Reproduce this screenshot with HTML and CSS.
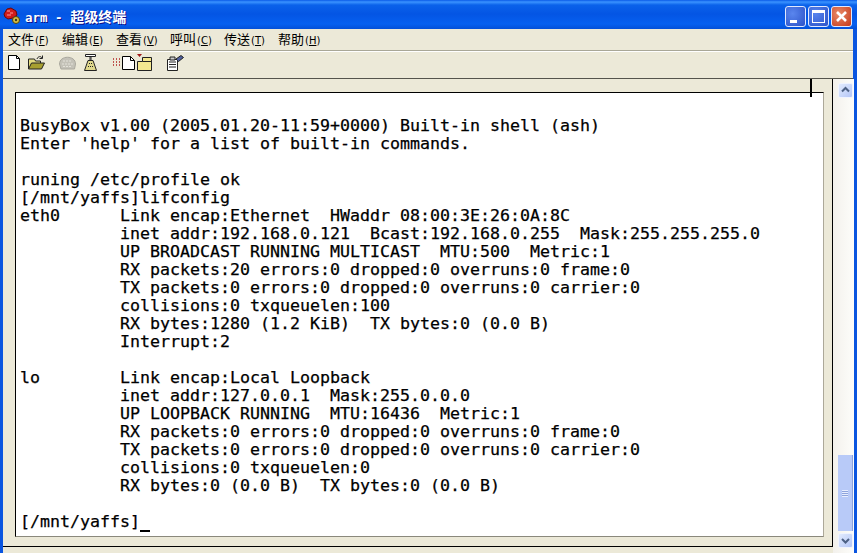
FILE: index.html
```html
<!DOCTYPE html>
<html lang="zh">
<head>
<meta charset="utf-8">
<title>arm - 超级终端</title>
<link rel="stylesheet" href="styles.css">
</head>
<body>
<div class="window">
  <header class="titlebar">
    <svg class="appicon" width="18" height="18" viewBox="0 0 18 18"><path d="M1 7 L4 2 L8 1 L13 4 L14 8 L10 11 L5 12 L2 10Z" fill="#d01c1c" stroke="#6a0808" stroke-width="1"/><path d="M4 4h3M7 6h3M4 8h4" stroke="#ff9a9a"/><circle cx="13" cy="13" r="3.500" fill="#d8c040" stroke="#4a4010"/><circle cx="13" cy="13" r="1.200" fill="#3a3a20"/></svg>
    <span class="titletext"><span class="latin">arm - </span>超级终端</span>
    <div class="wbtns">
      <span class="wbtn"><i class="min"></i></span>
      <span class="wbtn"><i class="max"></i></span>
      <span class="wbtn close"><svg width="21" height="21" viewBox="0 0 21 21"><path d="M6 6l9 9M15 6l-9 9" stroke="#fff" stroke-width="2.600"/></svg></span>
    </div>
  </header>
  <nav class="menubar">
    <span>文件<small>(<u>F</u>)</small></span><span>编辑<small>(<u>E</u>)</small></span><span>查看<small>(<u>V</u>)</small></span><span>呼叫<small>(<u>C</u>)</small></span><span>传送<small>(<u>T</u>)</small></span><span>帮助<small>(<u>H</u>)</small></span>
  </nav>
  <div class="toolbar">
    <svg class="tb t1" width="12" height="15" viewBox="0 0 12 15"><path d="M.5.500h8l3 3v11H.5z" fill="#fff" stroke="#000"/><path d="M8.500.500v3h3" fill="none" stroke="#000"/></svg>
    <svg class="tb t2" width="17" height="15" viewBox="0 0 17 15"><path d="M.5 14V4h6l1 2h5v2" fill="#e4dc80" stroke="#222"/><path d="M.5 14l3-6h13l-3 6z" fill="#a8a030" stroke="#222"/><path d="M9 4c1-3 4-3 5-1M14.500 .5v3h-3" fill="none" stroke="#222"/></svg>
    <svg class="tb t3" width="17" height="14" viewBox="0 0 17 14"><path d="M.5 8c0-9 16-9 16 0l-1 5H2z" fill="#c4c2b8" stroke="#aaa89e"/><path d="M4 5h9M3 8h11M4 10.500h9" stroke="#e4e2da" stroke-dasharray="2 1"/></svg>
    <svg class="tb t4" width="13" height="19" viewBox="0 0 13 19"><path d="M1.500 1.500h10v2h-10zM6 3.500h1v4H6z" fill="#fff" stroke="#222"/><path d="M4 7.500h5l3.500 10H.5z" fill="#e0d88c" stroke="#222"/><path d="M5 10.500h3M4 13.500h5" stroke="#222" stroke-dasharray="1 1"/></svg>
    <svg class="tb t5" width="22" height="14" viewBox="0 0 22 14"><path d="M0 3h1M3 3h1M6 3h1M0 6h1M3 6h1M6 6h1M0 9h1M3 9h1M6 9h1" stroke="#b02020" stroke-width="1.400"/><path d="M9.500.500h8l4 4v9h-12z" fill="#fff" stroke="#000"/><path d="M17.500.500v4h4" fill="none" stroke="#000"/></svg>
    <svg class="tb t6" width="15" height="17" viewBox="0 0 15 17"><path d="M0 0h5L2.500 3z" fill="#a01818"/><path d="M.5 16.500V7.500h5V3.500h9v13z" fill="#f4e890" stroke="#222"/><path d="M5.500 7.500h9" stroke="#222"/></svg>
    <svg class="tb t7" width="17" height="16" viewBox="0 0 17 16"><path d="M.5 4.500h10v11H.5z" fill="#fff" stroke="#222"/><path d="M2 7h7M2 9.500h7M2 12h7" stroke="#222"/><path d="M3 2h5v3H3z" fill="#ccc" stroke="#222"/><path d="M9 4l5-3.500 2.500 2-5 4z" fill="#5060a0" stroke="#222"/></svg>
  </div>
  <main class="client">
    <div class="pane">
<pre class="terminal">BusyBox v1.00 (2005.01.20-11:59+0000) Built-in shell (ash)
Enter 'help' for a list of built-in commands.

runing /etc/profile ok
[/mnt/yaffs]lifconfig
eth0      Link encap:Ethernet  HWaddr 08:00:3E:26:0A:8C
          inet addr:192.168.0.121  Bcast:192.168.0.255  Mask:255.255.255.0
          UP BROADCAST RUNNING MULTICAST  MTU:500  Metric:1
          RX packets:20 errors:0 dropped:0 overruns:0 frame:0
          TX packets:0 errors:0 dropped:0 overruns:0 carrier:0
          collisions:0 txqueuelen:100
          RX bytes:1280 (1.2 KiB)  TX bytes:0 (0.0 B)
          Interrupt:2

lo        Link encap:Local Loopback
          inet addr:127.0.0.1  Mask:255.0.0.0
          UP LOOPBACK RUNNING  MTU:16436  Metric:1
          RX packets:0 errors:0 dropped:0 overruns:0 frame:0
          TX packets:0 errors:0 dropped:0 overruns:0 carrier:0
          collisions:0 txqueuelen:0
          RX bytes:0 (0.0 B)  TX bytes:0 (0.0 B)

[/mnt/yaffs]<span class="cursor">&nbsp;</span></pre>
      <i class="tick"></i>
    </div>
    <aside class="scrollbar">
      <span class="sbtn"><svg width="15" height="15" viewBox="0 0 15 15"><path d="M4 8.500l3.500-3.500 3.500 3.500" fill="none" stroke="#4d6185" stroke-width="2"/></svg></span>
      <span class="track"></span>
      <span class="thumb"><i></i></span>
      <span class="sbtn"><svg width="15" height="15" viewBox="0 0 15 15"><path d="M4 6l3.500 3.500L11 6" fill="none" stroke="#4d6185" stroke-width="2"/></svg></span>
    </aside>
  </main>
</div>
</body>
</html>
```
FILE: styles.css
```css
* { box-sizing: border-box; }
html, body { margin: 0; padding: 0; overflow: hidden; }
body { width: 857px; height: 553px; background: #ece9d8; }
.window { width: 857px; height: 553px; display: flex; flex-direction: column; background: #ece9d8; border-left: 3px solid #0a55e0; border-right: 4px solid #0a55e0; position: relative; }
.titlebar { height: 29px; margin: 0 -4px 0 -3px; padding: 3px 4px 0 3px; display: flex; align-items: center; color: #fff; background: linear-gradient(#0a5be8 0, #3a93ff 2px, #0a62ea 5px, #0455e4 14px, #0660f0 24px, #0350d8 29px); }
.appicon { margin-right: 4px; }
.titletext { font: bold 14px "Noto Sans CJK SC", sans-serif; white-space: pre; text-shadow: 1px 1px #0f1089; }
.latin { font: bold 12.500px "DejaVu Sans Mono", monospace; }
.wbtns { margin-left: auto; display: flex; gap: 2px; padding-right: 1px; }
.wbtn { width: 21px; height: 21px; border: 1px solid #dfe8ff; border-radius: 3px; background: radial-gradient(circle at 35% 35%, #5a86ee, #2b52c8); position: relative; display: block; }
.wbtn.close { background: radial-gradient(circle at 35% 35%, #e98a68, #c4391a); }
.wbtn.close svg { display: block; margin: -1px; }
.min { position: absolute; left: 4px; bottom: 3px; width: 7px; height: 3px; background: #fff; }
.max { position: absolute; left: 3px; top: 3px; width: 13px; height: 13px; border: 1px solid #fff; border-top-width: 3px; }
.menubar { height: 22px; display: flex; align-items: center; padding: 0 0 2px 5px; gap: 10px; font: 13px/1 "Noto Sans CJK SC", sans-serif; color: #000; border-bottom: 1px solid #a9a797; box-shadow: 0 1px #fff; }
.menubar small { font: 10px "DejaVu Sans", sans-serif; margin-left: 1px; }
.menubar span { width: 44px; white-space: nowrap; }
.toolbar { height: 28px; display: flex; align-items: center; border-bottom: 1px solid #55544c; padding: 0 0 4px 5px; }
.tb { display: block; flex: none; }
.t2 { margin-left: 8px; }
.t3 { margin-left: 14px; }
.t4 { margin-left: 8px; }
.t5 { margin-left: 16px; }
.t6 { margin-left: 2px; }
.t7 { margin-left: 15px; }
.client { flex: 1; display: flex; min-height: 0; }
.pane { width: 830px; height: 468px; padding: 13px 8px 8px 12px; border-right: 1px solid #000; border-bottom: 1px solid #000; position: relative; flex: none; }
.terminal { margin: 0; height: 445px; width: 809px; padding: 24px 0 0 4px; background: #fff; border: 1px solid #8a887c; border-top-color: #000; border-left-color: #000; border-right-color: #aca899; font: 16.610px/18px "DejaVu Sans Mono", monospace; -webkit-text-stroke: .25px #000; color: #000; overflow: hidden; }
.cursor { border-bottom: 2px solid #000; display: inline-block; width: 10px; height: 16px; vertical-align: -2px; line-height: 1; }
.tick { position: absolute; left: 807px; top: 0; width: 2px; height: 18px; background: #000; }
.scrollbar { flex: 1; padding: 4px 1px 5px 5px; display: flex; flex-direction: column; background: linear-gradient(90deg, #f3f1ec, #fdfdfa); }
.sbtn { width: 15px; height: 15px; flex: none; display: block; background: linear-gradient(135deg, #e2ebfe, #b4c6f6); border: 1px solid #f0f4ff; border-radius: 2px; }
.sbtn svg { display: block; margin: -1px; }
.track { flex: 1; }
.thumb { height: 76px; flex: none; margin-bottom: 2px; background: #b8caf8; display: flex; align-items: center; justify-content: center; border-right: 1px solid #8ea4dc; }
.thumb i { width: 6px; height: 7px; background: repeating-linear-gradient(#e8eeff 0 1px, #8ea4dc 1px 2px); }
```
